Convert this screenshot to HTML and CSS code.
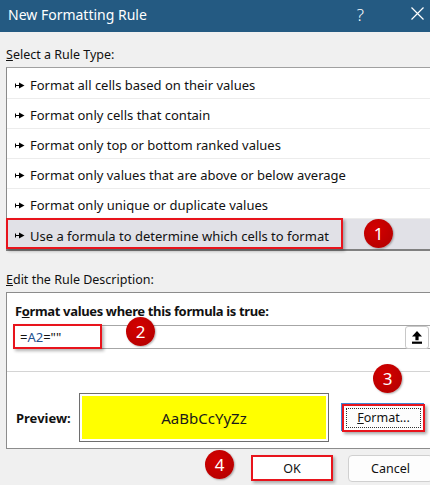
FILE: index.html
```html
<!DOCTYPE html>
<html lang="en">
<head>
<meta charset="utf-8">
<title>New Formatting Rule</title>
<link rel="stylesheet" href="styles.css">
</head>
<body>
<div class="dialog">
  <header class="titlebar">
    <span class="title">New Formatting Rule</span>
    <span class="help">?</span>
    <svg class="close" width="13" height="13" viewBox="0 0 13 13"><path d="M0.5 0.5 L12.5 12.5 M12.5 0.5 L0.5 12.5" stroke="#fff" stroke-width="1.2" fill="none"/></svg>
  </header>
  <main class="content">
    <div class="label"><u>S</u>elect a Rule Type:</div>
    <ul class="rule-list">
      <li class="rule"><svg class="bullet" width="10" height="7" viewBox="0 0 10 7"><path d="M0.5 1.5 V5.5 M0.5 3.5 H5" stroke="#000" stroke-width="1" fill="none"/><path d="M4 0.5 L9.5 3.5 L4 6.5 Z" fill="#000"/></svg>Format all cells based on their values</li>
      <li class="rule"><svg class="bullet" width="10" height="7" viewBox="0 0 10 7"><path d="M0.5 1.5 V5.5 M0.5 3.5 H5" stroke="#000" stroke-width="1" fill="none"/><path d="M4 0.5 L9.5 3.5 L4 6.5 Z" fill="#000"/></svg>Format only cells that contain</li>
      <li class="rule"><svg class="bullet" width="10" height="7" viewBox="0 0 10 7"><path d="M0.5 1.5 V5.5 M0.5 3.5 H5" stroke="#000" stroke-width="1" fill="none"/><path d="M4 0.5 L9.5 3.5 L4 6.5 Z" fill="#000"/></svg>Format only top or bottom ranked values</li>
      <li class="rule"><svg class="bullet" width="10" height="7" viewBox="0 0 10 7"><path d="M0.5 1.5 V5.5 M0.5 3.5 H5" stroke="#000" stroke-width="1" fill="none"/><path d="M4 0.5 L9.5 3.5 L4 6.5 Z" fill="#000"/></svg>Format only values that are above or below average</li>
      <li class="rule"><svg class="bullet" width="10" height="7" viewBox="0 0 10 7"><path d="M0.5 1.5 V5.5 M0.5 3.5 H5" stroke="#000" stroke-width="1" fill="none"/><path d="M4 0.5 L9.5 3.5 L4 6.5 Z" fill="#000"/></svg>Format only unique or duplicate values</li>
      <li class="rule selected"><svg class="bullet" width="10" height="7" viewBox="0 0 10 7"><path d="M0.5 1.5 V5.5 M0.5 3.5 H5" stroke="#000" stroke-width="1" fill="none"/><path d="M4 0.5 L9.5 3.5 L4 6.5 Z" fill="#000"/></svg>Use a formula to determine which cells to format</li>
    </ul>
    <div class="label label-edit"><u>E</u>dit the Rule Description:</div>
    <section class="desc">
      <div class="desc-top">
        <div class="desc-title">F<u>o</u>rmat values where this formula is true:</div>
        <div class="formula">
          <span class="formula-text">=<span class="ref">A2</span>=""</span>
          <span class="ref-btn"><svg width="10" height="13" viewBox="0 0 10 13"><path d="M5 0 L10 5.5 L6.6 5.5 L6.6 9.3 L3.4 9.3 L3.4 5.5 L0 5.5 Z" fill="#000"/><rect x="0" y="10.6" width="10" height="2.2" fill="#000"/></svg></span>
        </div>
      </div>
      <div class="desc-bottom">
        <span class="preview-label">Preview:</span>
        <div class="preview"><div class="preview-fill">AaBbCcYyZz</div></div>
        <span class="btn format-btn"><span class="focus-ring"><u>F</u>ormat...</span></span>
      </div>
    </section>
    <div class="actions">
      <span class="btn ok-btn">OK</span>
      <span class="btn cancel-btn">Cancel</span>
    </div>
  </main>
  <div class="mark mark-rule"></div>
  <div class="mark mark-formula"></div>
  <span class="badge badge-1">1</span>
  <span class="badge badge-2">2</span>
  <span class="badge badge-3">3</span>
  <span class="badge badge-4">4</span>
</div>
</body>
</html>
```
FILE: styles.css
```css
html, body {
  margin: 0;
  padding: 0;
  overflow: hidden;
  background: #f0f0f0;
}
body {
  font-family: "Noto Sans", "Open Sans", sans-serif;
  font-size: 13px;
  color: #111;
}
.dialog {
  position: relative;
  width: 442px;
  height: 485px;
  background: #f0f0f0;
}
.titlebar {
  height: 32px;
  background: #245a82;
  color: #fff;
  display: flex;
  align-items: center;
  padding-left: 8px;
}
.title {
  font-size: 14px;
  flex: 1;
  padding-bottom: 3px;
}
.help {
  font-size: 17px;
  font-weight: 300;
  margin-right: 47px;
  padding-bottom: 3px;
}
.close {
  margin-right: 18px;
  margin-bottom: 5px;
}
.content {
  padding-left: 6px;
}
.label {
  font-size: 12.5px;
  line-height: 18px;
  margin-top: 14px;
  margin-bottom: 3px;
}
.label-edit {
  margin-top: 20px;
}
.rule-list {
  list-style: none;
  margin: 0;
  padding: 1px 0 0 0;
  background: #fff;
  border-top: 1px solid #a0a0a0;
  border-left: 1px solid #8a8a8a;
  border-bottom: 2px solid #808080;
  font-size: 13px;
}
.rule {
  height: 30px;
  box-sizing: border-box;
  border-bottom: 1px solid #ececec;
  padding: 3px 0 0 8px;
  display: flex;
  align-items: center;
}
.rule.selected {
  background: #e1e1e7;
  border-bottom: none;
}
.bullet {
  margin-right: 5px;
  flex: none;
}
.desc {
  background: #fff;
  border: 1px solid #8c8c8c;
  border-right: none;
}
.desc-top {
  padding: 9px 0 22px 8px;
  border-bottom: 1px solid #d4d4d4;
}
.desc-title {
  font-weight: bold;
  line-height: 18px;
  letter-spacing: -0.35px;
  margin-bottom: 5px;
}
.formula {
  height: 24px;
  box-sizing: border-box;
  border: 1px solid #a6a6a6;
  border-right: none;
  margin-left: -1px;
  display: flex;
  align-items: center;
  padding-left: 5px;
}
.formula-text {
  flex: 1;
}
.ref {
  color: #24508f;
}
.ref-btn {
  width: 24px;
  height: 23px;
  box-sizing: border-box;
  border: 1px solid #c8c8c8;
  border-radius: 3px;
  background: #fff;
  display: flex;
  align-items: center;
  justify-content: center;
  margin-right: 13px;
  margin-top: 1px;
}
.desc-bottom {
  display: flex;
  align-items: center;
  padding: 21px 0 6px 9px;
}
.preview-label {
  font-weight: bold;
  width: 63px;
}
.preview {
  width: 250px;
  height: 49px;
  box-sizing: border-box;
  border: 1px solid #6e6e6e;
  padding: 2px;
  background: #fff;
}
.preview-fill {
  height: 100%;
  background: #ffff00;
  display: flex;
  align-items: center;
  justify-content: center;
  font-size: 15px;
  color: #1a1a1a;
}
.btn {
  display: flex;
  align-items: center;
  justify-content: center;
  box-sizing: border-box;
  background: #fdfdfd;
  color: #111;
  font-size: 12.5px;
}
.format-btn {
  margin-left: 13px;
  width: 83px;
  height: 28px;
  border: 2px solid #e8141c;
  box-shadow: -1px -1px 0 #3d8ad6, 2px 2px 3px rgba(0, 0, 0, 0.35);
  padding: 2px;
}
.focus-ring {
  width: 100%;
  height: 100%;
  box-sizing: border-box;
  border: 1px dotted #333;
  display: flex;
  align-items: center;
  justify-content: center;
}
.actions {
  display: flex;
  gap: 15px;
  padding-left: 245px;
  margin-top: 6px;
}
.ok-btn {
  width: 82px;
  height: 26px;
  border: 2px solid #e8141c;
  background: #fff;
  box-shadow: 2px 2px 3px rgba(0, 0, 0, 0.3);
}
.cancel-btn {
  width: 85px;
  height: 27px;
  border: 1px solid #d0d0d0;
  border-radius: 4px;
}
.mark {
  position: absolute;
  box-sizing: border-box;
  border: 2px solid #e8141c;
  box-shadow: 2px 2px 3px rgba(0, 0, 0, 0.3);
}
.mark-rule {
  left: 6px;
  top: 218px;
  width: 337px;
  height: 31px;
}
.mark-formula {
  left: 13px;
  top: 324px;
  width: 89px;
  height: 25px;
}
.badge {
  position: absolute;
  width: 29px;
  height: 29px;
  border-radius: 50%;
  background: radial-gradient(circle at 40% 35%, #d40000, #b80000 75%);
  color: #fff;
  font-size: 17px;
  line-height: 29px;
  text-align: center;
  box-shadow: 1px 1px 2px rgba(0, 0, 0, 0.3);
}
.badge-1 { left: 364px; top: 219px; }
.badge-2 { left: 126px; top: 317px; }
.badge-3 { left: 373px; top: 364px; }
.badge-4 { left: 205px; top: 450px; }
```
